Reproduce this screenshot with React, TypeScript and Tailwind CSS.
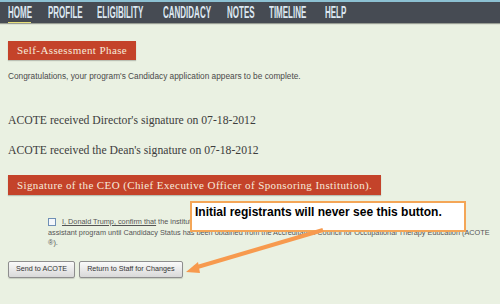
const navItems = [
  { label: 'HOME', w: 'w-[23px]' },
  { label: 'PROFILE', w: 'w-[32px]' },
  { label: 'ELIGIBILITY', w: 'w-[49px]' },
  { label: 'CANDIDACY', w: 'w-[47px]' },
  { label: 'NOTES', w: 'w-[25px]' },
  { label: 'TIMELINE', w: 'w-[39px]' },
  { label: 'HELP', w: 'w-[19px]' },
];

function Arrow() {
  return (
    <svg className="absolute left-0 top-0 pointer-events-none" width="500" height="304" viewBox="0 0 500 304">
      <line x1="323" y1="230" x2="194" y2="268" stroke="#f79a4e" strokeWidth="4" />
      <polygon points="186,272 198,262 200,273" fill="#f79a4e" />
    </svg>
  );
}

export default function App() {
  return (
    <div className="relative w-[500px] h-[304px] overflow-hidden bg-[#eaf1e2]">
      {/* Top navigation */}
      <div className="h-[23px] bg-[#464b53] border-t-2 border-[#8cc0d2] shadow-[0_1px_1px_rgba(0,0,0,0.35)] flex items-center pl-[8px] gap-[17px]">
        {navItems.map((item) => (
          <span key={item.label} className={`relative ${item.w} h-[12px] whitespace-nowrap`}>
            <span
              className="absolute left-0 top-[-2px] origin-left scale-x-[0.5] text-[#dde8f2] text-[16px] font-bold leading-[16px]"
              style={{ fontFamily: '"Liberation Sans", Arial, sans-serif' }}
            >
              {item.label}
            </span>
            {item.label === 'HOME' && (
              <span className="absolute left-0 right-0 top-[15px] h-[1px] bg-[#e8e07a]" />
            )}
          </span>
        ))}
      </div>

      <div className="pl-[8px]">
        <div
          className="mt-[18px] inline-block bg-[#c4432a] text-[#f6eadb] text-[11px] leading-[19px] px-[9px] tracking-[0.4px] shadow-[0_1px_1px_rgba(0,0,0,0.2)]"
          style={{ fontFamily: '"Liberation Serif", serif' }}
        >
          Self-Assessment Phase
        </div>

        <p className="mt-[10px] text-[8.3px] leading-[12px] text-[#4a4a4a]" style={{ fontFamily: '"Liberation Sans", Arial, sans-serif' }}>
          Congratulations, your program's Candidacy application appears to be complete.
        </p>

        <div className="text-[11.7px] text-[#3d3d3d]" style={{ fontFamily: '"Liberation Serif", Georgia, serif' }}>
          <p className="mt-[32px] leading-[14px]">ACOTE received Director's signature on 07-18-2012</p>
          <p className="mt-[16px] leading-[14px]">ACOTE received the Dean's signature on 07-18-2012</p>
        </div>

        <div
          className="mt-[17px] inline-block bg-[#c4432a] text-[#f6eadb] text-[11px] leading-[20px] px-[9px] tracking-[0.4px] shadow-[0_1px_1px_rgba(0,0,0,0.2)]"
          style={{ fontFamily: '"Liberation Serif", serif' }}
        >
          Signature of the CEO (Chief Executive Officer of Sponsoring Institution).
        </div>

        <div
          className="mt-[22px] ml-[40px] text-[7.3px] leading-[10.5px] text-[#555] whitespace-nowrap"
          style={{ fontFamily: '"Liberation Sans", Arial, sans-serif' }}
        >
          <div className="flex items-center gap-[6px]">
            <span className="inline-block w-[8px] h-[8px] border border-[#6f8fb5] bg-[#f4f7fb]" />
            <span>
              <span className="underline">I, Donald Trump, confirm that</span> the institution will not admit any students into the occupational therapy
            </span>
          </div>
          <div>assistant program until Candidacy Status has been obtained from the Accreditation Council for Occupational Therapy Education (ACOTE</div>
          <div>®).</div>
        </div>

        <div className="mt-[12px] flex gap-[4px]" style={{ fontFamily: '"Liberation Sans", Arial, sans-serif' }}>
          <button className="h-[17px] px-[7px] text-[7.2px] text-[#333] border border-[#8e8e8e] rounded-[2px] bg-gradient-to-b from-[#fafafa] to-[#d9d9d9] shadow-[0_1px_1px_rgba(0,0,0,0.15)]">
            Send to ACOTE
          </button>
          <button className="h-[17px] px-[7px] text-[7.2px] text-[#333] border border-[#8e8e8e] rounded-[2px] bg-gradient-to-b from-[#fafafa] to-[#d9d9d9] shadow-[0_1px_1px_rgba(0,0,0,0.15)]">
            Return to Staff for Changes
          </button>
        </div>
      </div>

      {/* Annotation callout */}
      <div
        className="absolute left-[190px] top-[201px] w-[276px] h-[31px] bg-white border-2 border-[#f4a657] px-[3px] pt-[2px] text-[12px] font-bold leading-[14px] text-black"
        style={{ fontFamily: '"Liberation Sans", Arial, sans-serif' }}
      >
        Initial registrants will never see this button.
      </div>
      <Arrow />
    </div>
  );
}
